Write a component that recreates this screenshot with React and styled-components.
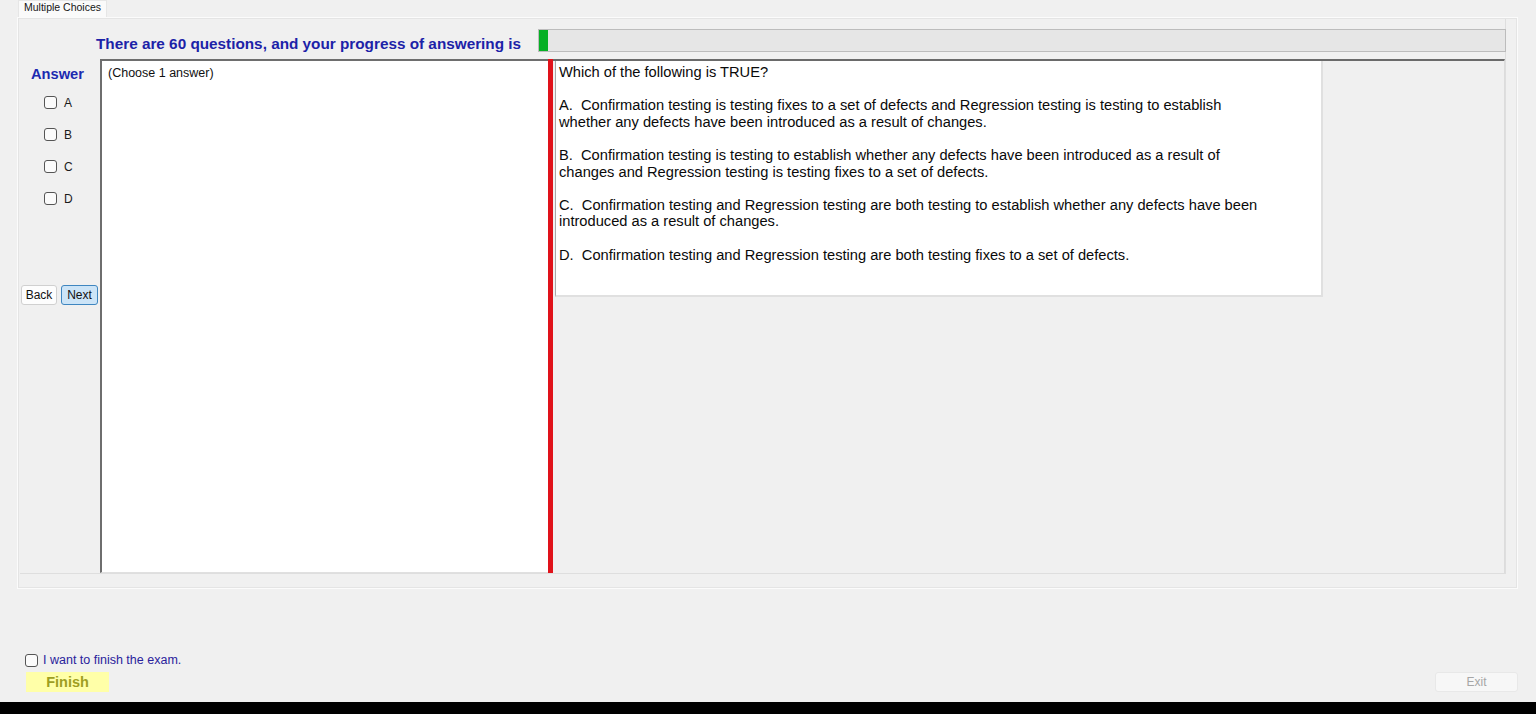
import styled, { createGlobalStyle } from "styled-components";

const GlobalStyle = createGlobalStyle`
  html, body {
    margin: 0;
    padding: 0;
    background: #f0f0f0;
  }
  body {
    font-family: "Liberation Sans", Arial, sans-serif;
    overflow: hidden;
  }
`;

const Window = styled.div`
  width: 1536px;
  height: 714px;
  display: flex;
  flex-direction: column;
  background: #f0f0f0;
  overflow: hidden;
`;

const TabStrip = styled.div`
  height: 17px;
  display: flex;
  padding-left: 18px;
`;

const Tab = styled.div`
  width: 89px;
  height: 17px;
  box-sizing: border-box;
  background: #fafafa;
  border: 1px solid #e6e6e6;
  border-bottom: none;
  padding: 0 0 0 5px;
  font-size: 10.5px;
  line-height: 13px;
  color: #151515;
  white-space: nowrap;
`;

const TabPage = styled.div`
  margin-left: 17px;
  width: 1501px;
  height: 572px;
  box-sizing: border-box;
  border: 1px solid #fbfbfb;
  outline: 1px solid #e4e4e4;
  outline-offset: -2px;
  padding: 0 11px 14px 2px;
`;

const Group = styled.div`
  height: 100%;
  box-sizing: border-box;
  border-right: 1px solid #dedede;
  border-bottom: 1px solid #dedede;
  display: flex;
  flex-direction: column;
`;

const Header = styled.div`
  margin-top: 11px;
  height: 23px;
  padding-left: 76px;
  display: flex;
`;

const Heading = styled.div`
  width: 442px;
  flex: none;
  margin-top: 6px;
  font-size: 15.3px;
  line-height: 18px;
  font-weight: bold;
  color: #1c22a8;
  white-space: nowrap;
`;

const Progress = styled.div`
  flex: 1;
  margin-right: -1px;
  box-sizing: border-box;
  border: 1px solid #bcbcbc;
  background: #e6e6e6;
  display: flex;
`;

const ProgressFill = styled.div`
  background: #06b025;
`;

const Body = styled.div`
  margin-top: 7px;
  flex: 1;
  display: flex;
`;

const AnswerColumn = styled.div`
  width: 80px;
  flex: none;
  display: flex;
  flex-direction: column;
`;

const AnswerTitle = styled.div`
  margin: 7px 0 0 11px;
  font-size: 14.67px;
  line-height: 17px;
  font-weight: bold;
  color: #1c2ab0;
`;

const Options = styled.div`
  margin-top: 13px;
  padding-left: 24px;
  display: flex;
  flex-direction: column;
  gap: 19px;
`;

const Option = styled.label`
  height: 13px;
  display: flex;
  align-items: center;
  gap: 7px;
  font-size: 12px;
  color: #1a1a1a;
`;

const Check = styled.input.attrs({ type: "checkbox" })`
  appearance: none;
  margin: 0;
  width: 13px;
  height: 13px;
  box-sizing: border-box;
  border: 1px solid #555;
  border-radius: 3px;
  background: #fbfbfb;
  flex: none;
`;

const NavRow = styled.div`
  margin-top: 80px;
  padding-left: 1px;
  display: flex;
  gap: 4px;
`;

const NavButton = styled.button`
  width: ${p => p.$w}px;
  height: 20px;
  padding: 0;
  box-sizing: border-box;
  border: 1px solid ${p => (p.$primary ? "#3f86c0" : "#d0d0d0")};
  border-radius: 3px;
  background: ${p => (p.$primary ? "#cce4f7" : "#fdfdfd")};
  font-family: "Liberation Sans", Arial, sans-serif;
  font-size: 12px;
  color: #111;
`;

const AnswerBox = styled.div`
  width: 448px;
  flex: none;
  box-sizing: border-box;
  background: #fff;
  border-top: 2px solid #6e6e6e;
  border-left: 2px solid #6e6e6e;
  border-bottom: 1px solid #e0e0e0;
  padding: 4px 0 0 6px;
  font-size: 12.5px;
  line-height: 16px;
  color: #111;
`;

const Splitter = styled.div`
  width: 5px;
  flex: none;
  background: #e0121a;
`;

const QuestionPanel = styled.div`
  flex: 1;
  box-sizing: border-box;
  border-top: 2px solid #6a6a6a;
  border-right: 1px solid #dcdcdc;
  padding-left: 2px;
`;

const QuestionBox = styled.div`
  width: 768px;
  height: 236px;
  box-sizing: border-box;
  background: #fff;
  border-left: 1px solid #a8a8a8;
  border-right: 2px solid #e0e0e0;
  border-bottom: 2px solid #e0e0e0;
  padding: 3px 0 0 3px;
  font-size: 14.67px;
  line-height: 16.6px;
  color: #0a0a0a;
  white-space: nowrap;
`;

const Para = styled.p`
  margin: 0 0 16.6px;
`;

const Footer = styled.div`
  margin-top: 64px;
  padding: 0 18px 0 25px;
  display: flex;
  justify-content: space-between;
  align-items: flex-end;
`;

const FinishGroup = styled.div`
  display: flex;
  flex-direction: column;
`;

const FinishCheck = styled.label`
  height: 14px;
  display: flex;
  align-items: center;
  gap: 5px;
  font-size: 12.5px;
  color: #2a229c;
`;

const FinishButton = styled.div`
  margin: 5px 0 0 1px;
  width: 83px;
  height: 20px;
  background: #ffffa8;
  color: #9e9e22;
  font-size: 14.5px;
  font-weight: bold;
  line-height: 21px;
  text-align: center;
`;

const ExitButton = styled.div`
  width: 83px;
  height: 20px;
  box-sizing: border-box;
  border: 1px solid #e8e8e8;
  border-radius: 3px;
  background: #f7f7f7;
  color: #a6a6a6;
  font-size: 12px;
  line-height: 18px;
  text-align: center;
`;

const Taskbar = styled.div`
  margin-top: auto;
  height: 12px;
  background: #000;
`;

const options = ["A", "B", "C", "D"];

export default function App() {
  const answered = 0;
  const fillWidth = 9 + Math.round((answered / 60) * 958);
  return (
    <Window>
      <GlobalStyle />
      <TabStrip>
        <Tab>Multiple Choices</Tab>
      </TabStrip>
      <TabPage>
        <Group>
          <Header>
            <Heading>There are 60 questions, and your progress of answering is</Heading>
            <Progress>
              <ProgressFill style={{ width: `${fillWidth}px` }} />
            </Progress>
          </Header>
          <Body>
            <AnswerColumn>
              <AnswerTitle>Answer</AnswerTitle>
              <Options>
                {options.map(o => (
                  <Option key={o}>
                    <Check />
                    {o}
                  </Option>
                ))}
              </Options>
              <NavRow>
                <NavButton $w={36}>Back</NavButton>
                <NavButton $w={37} $primary>Next</NavButton>
              </NavRow>
            </AnswerColumn>
            <AnswerBox>(Choose 1 answer)</AnswerBox>
            <Splitter />
            <QuestionPanel>
              <QuestionBox>
                <Para>Which of the following is TRUE?</Para>
                <Para>
                  A.&nbsp; Confirmation testing is testing fixes to a set of defects and Regression testing is testing to establish
                  <br />
                  whether any defects have been introduced as a result of changes.
                </Para>
                <Para>
                  B.&nbsp; Confirmation testing is testing to establish whether any defects have been introduced as a result of
                  <br />
                  changes and Regression testing is testing fixes to a set of defects.
                </Para>
                <Para>
                  C.&nbsp; Confirmation testing and Regression testing are both testing to establish whether any defects have been
                  <br />
                  introduced as a result of changes.
                </Para>
                <Para>D.&nbsp; Confirmation testing and Regression testing are both testing fixes to a set of defects.</Para>
              </QuestionBox>
            </QuestionPanel>
          </Body>
        </Group>
      </TabPage>
      <Footer>
        <FinishGroup>
          <FinishCheck>
            <Check />
            I want to finish the exam.
          </FinishCheck>
          <FinishButton>Finish</FinishButton>
        </FinishGroup>
        <ExitButton>Exit</ExitButton>
      </Footer>
      <Taskbar />
    </Window>
  );
}
